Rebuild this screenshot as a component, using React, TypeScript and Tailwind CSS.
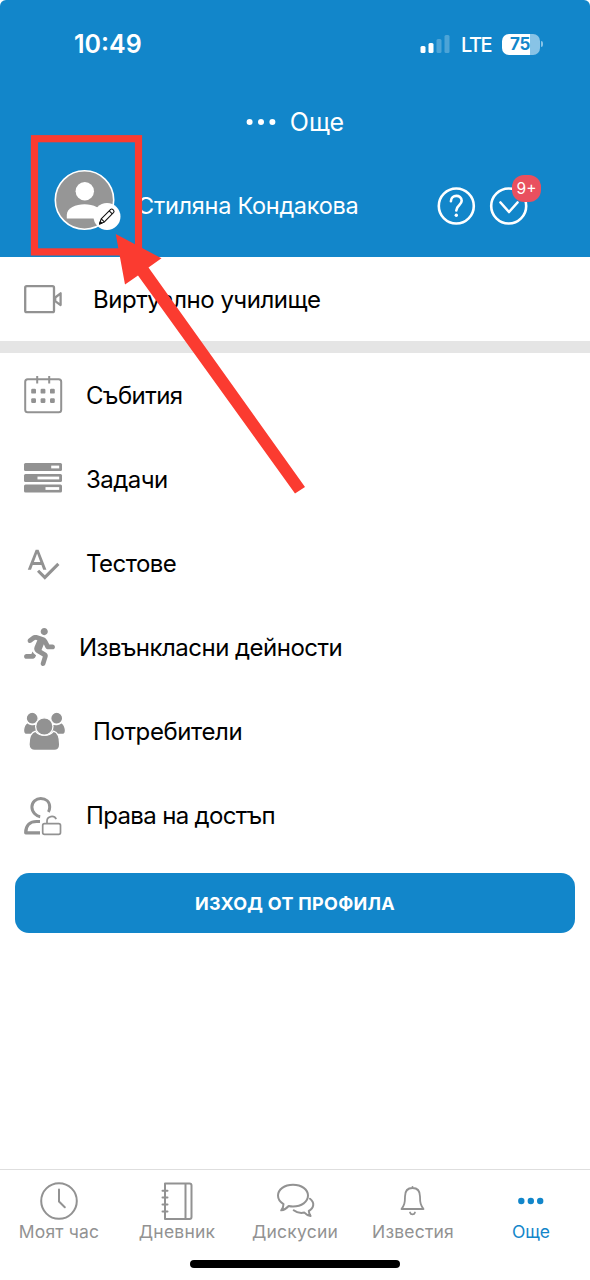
import type { ReactNode } from "react";
import { FaRunning } from "react-icons/fa";
import { MdSpellcheck } from "react-icons/md";

function Dots({ className }: { className: string }) {
  return (
    <svg className={className} viewBox="0 0 30 8" fill="currentColor">
      <circle cx="3.6" cy="4" r="3" />
      <circle cx="15" cy="4" r="3" />
      <circle cx="26.4" cy="4" r="3" />
    </svg>
  );
}

function StatusBar() {
  return (
    <div className="flex h-[88px] items-center pl-[74px] pr-[47px]">
      <span className="pt-px text-[25px] font-semibold leading-none">10:49</span>
      <svg className="ml-auto mr-[11px] h-[20px] w-[30px]" viewBox="0 0 30 20" fill="currentColor">
        <rect x="0.5" y="12" width="5" height="7" rx="1.5" />
        <rect x="8.5" y="9" width="5" height="10" rx="1.5" />
        <rect x="16.5" y="5" width="5" height="14" rx="1.5" opacity="0.25" />
        <rect x="24.5" y="1" width="5" height="18" rx="1.5" opacity="0.25" />
      </svg>
      <span className="w-[31px] whitespace-nowrap pt-px text-[20px] font-medium leading-none tracking-[-1.5px]">LTE</span>
      <div className="ml-[10px] flex h-[21px] w-[38px] items-center justify-center overflow-hidden rounded-[7px] bg-[linear-gradient(to_right,white_75%,#88c3e6_75%)] pr-[2px] text-[17px] font-bold leading-none tracking-[-0.3px] text-[#1286ca]">
        75
      </div>
      <div className="ml-px h-[6px] w-[2px] rounded-r-full bg-[#88c3e6]" />
    </div>
  );
}

function Avatar() {
  return (
    <svg className="mb-[8px] h-[66px] w-[68px] shrink-0" viewBox="0 0 68 66" fill="none">
      <circle cx="30.5" cy="31" r="29.2" fill="#969696" stroke="#fff" strokeWidth="1.6" />
      <circle cx="30.8" cy="22.3" r="9.2" fill="#fff" />
      <path d="M12.8 49.5v-3.7c0-6.7 9-10.600 17.700-10.600s17.700 3.900 17.700 10.600v3.700z" fill="#fff" />
      <circle cx="53" cy="47.500" r="13.500" fill="#fff" />
      <g stroke="#111" strokeWidth="1.100" strokeLinejoin="round">
        <path d="M45.500 55l1.700-5.200 9.500-9.400c1.500-1.200 4.300 1.300 3 3l-9.300 9.500z" />
        <path d="M47.200 49.800l3.200 3.100M55.200 41.800l3.100 3.100" />
        <path d="M45.500 55l.8-2.300 1.500 1.500z" fill="#111" />
      </g>
    </svg>
  );
}

function ProfileHeader() {
  return (
    <header className="h-[257px] bg-[#1286ca] text-white">
      <StatusBar />
      <div className="flex h-[68px] items-center justify-center gap-[14px] leading-none">
        <Dots className="h-[8px] w-[30px]" />
        <span className="text-[25px]">Още</span>
      </div>
      <div className="flex h-[100px] items-center pl-[54px] pr-[62px]">
        <Avatar />
        <span className="ml-[15px] whitespace-nowrap text-[23.5px] leading-none tracking-[-0.28px]">Стиляна Кондакова</span>
        <svg className="ml-auto h-[40px] w-[40px]" viewBox="0 0 40 40" fill="none" stroke="currentColor" strokeWidth="2.600" strokeLinecap="round">
          <circle cx="20.300" cy="20" r="17.500" />
          <path d="M14.900 15.200c.2-7 10.600-7 10.800-.4 0 4.500-5.400 4.300-5.400 9.700" />
          <circle cx="20.300" cy="29.300" r="1.700" fill="currentColor" stroke="none" />
        </svg>
        <div className="relative ml-[12px] h-[40px] w-[40px]">
          <svg className="h-full w-full" viewBox="0 0 40 40" fill="none" stroke="currentColor" strokeWidth="2.600" strokeLinecap="round" strokeLinejoin="round">
            <circle cx="20.700" cy="20" r="17.500" />
            <path d="M12.500 16.500l8.500 9.500 8.500-9.500" />
          </svg>
          <span className="absolute left-[24px] top-[-11px] flex h-[27px] w-[29px] items-center justify-center rounded-[12px] bg-[#e9505f] text-[15.500px] leading-none">
            9+
          </span>
        </div>
      </div>
    </header>
  );
}

const iconClass = "h-[44px] w-[44px] shrink-0 text-[#929292]";

const cameraIcon = (
  <svg className={iconClass} viewBox="0 0 44 44" fill="none" stroke="currentColor" strokeWidth="2.300" strokeLinejoin="round">
    <rect x="3.200" y="9.200" width="28.800" height="26" rx="1.500" />
    <path d="M33.200 20.500L38.600 16.300v11.800l-5.400-4z" />
  </svg>
);

const calendarIcon = (
  <svg className={iconClass} viewBox="0 0 44 44" fill="none" stroke="currentColor" strokeWidth="2">
    <rect x="3.200" y="6.200" width="36" height="33" rx="2.500" />
    <path d="M15.200 3v7.500M27.200 3v7.500" />
    <g fill="currentColor" stroke="none">
      {[9.2, 18.6, 28].map((x) => (
        <g key={x}>
          <rect x={x} y="15.800" width="4.800" height="4.800" rx="1.200" />
          <rect x={x} y="25.200" width="4.800" height="4.800" rx="1.200" />
        </g>
      ))}
    </g>
  </svg>
);

const tasksIcon = (
  <svg className={iconClass} viewBox="0 0 44 44" fill="currentColor">
    <rect x="2" y="6" width="38" height="8" rx="1.500" />
    <rect x="2" y="17" width="38" height="8" rx="1.500" />
    <rect x="2" y="27.500" width="38" height="8" rx="1.500" />
    <g fill="#fff">
      <rect x="29.200" y="8.600" width="8" height="2.800" />
      <rect x="15.500" y="19.600" width="21.700" height="2.800" />
      <rect x="23.500" y="30.100" width="13.700" height="2.800" />
    </g>
  </svg>
);

const usersIcon = (
  <svg className={iconClass} viewBox="0 0 44 44" fill="currentColor" stroke="#fff" strokeWidth="1.300">
    <circle cx="10.200" cy="9.200" r="6" />
    <circle cx="34.700" cy="9.200" r="6" />
    <path d="M5.500 13.500c2 2.500 6.500 2.700 9 1.200L17 25.500H4c-3.500 0-3.500-8.500 1.500-12zM39.300 13.500c-2 2.500-6.500 2.700-9 1.200L28 25.500h13c3.500 0 3.500-8.500-1.700-12z" />
    <path d="M13.500 22.200c5 5.500 13 5.500 18 0 5.300 1.400 6.200 8.500 6.200 13.300 0 3.800-2.300 6-5.500 6h-19.500c-3.200 0-5.700-2.200-5.700-6 0-4.800 1.200-11.900 6.500-13.300z" />
    <circle cx="22.300" cy="17.500" r="8.700" />
  </svg>
);

const accessIcon = (
  <svg className={iconClass} viewBox="0 0 44 44" fill="none" stroke="currentColor">
    <path d="M18.200 23.800c-3.500-.5-8.300-4.200-8.300-9.800 0-5.300 4.200-8.500 8.800-8.500 5.300 0 9 3.400 9 8.500 0 2-.5 3.800-1.300 5" strokeWidth="3" />
    <path d="M18 28.500h-3.500c-6 0-10.800 3.600-10.800 11.300H18" strokeWidth="3.200" strokeLinejoin="round" />
    <rect x="20.700" y="30.700" width="17.800" height="10.600" rx="1.800" strokeWidth="1.700" />
    <path d="M25 30.500v-2.500c0-5 7.200-6.200 9.200-1.800" strokeWidth="1.700" />
  </svg>
);

function MenuRow({ icon, label, inset }: { icon: ReactNode; label: string; inset: string }) {
  return (
    <div className="flex h-[84px] items-center pl-[22px] text-[24px] leading-none text-black">
      {icon}
      <span className={`whitespace-nowrap pt-[2px] ${inset}`}>{label}</span>
    </div>
  );
}

function Tab({ label, children, active = false }: { label: string; children: ReactNode; active?: boolean }) {
  return (
    <div className={`flex flex-1 flex-col items-center pt-[8px] ${active ? "text-[#1286ca]" : "text-[#929292]"}`}>
      <div className="flex h-[44px] items-center justify-center">{children}</div>
      <span className={`text-[17.500px] leading-[20px] ${active ? "tracking-[0px]" : "tracking-[0.2px]"}`}>{label}</span>
    </div>
  );
}

function TabBar() {
  const stroke = { fill: "none", stroke: "currentColor", strokeWidth: 2, strokeLinejoin: "round", strokeLinecap: "round" } as const;
  return (
    <nav className="mt-auto h-[111px] border-t border-[#dedede]">
      <div className="flex h-[90px]">
        <Tab label="Моят час">
          <svg className="h-[44px] w-[44px]" viewBox="0 0 44 44" {...stroke}>
            <circle cx="22" cy="23" r="17.800" />
            <path d="M22 11.500V23.500l5.800 5.800" />
          </svg>
        </Tab>
        <Tab label="Дневник">
          <svg className="h-[44px] w-[44px]" viewBox="0 0 44 44" {...stroke}>
            <path d="M10 5.500h24.500a2 2 0 0 1 2 2v31.500a2 2 0 0 1-2 2H10zM30.500 5.500v35M7.500 12.800h5M7.500 19.500h5M7.500 26.500h5M7.500 33.500h5" />
          </svg>
        </Tab>
        <Tab label="Дискусии">
          <svg className="h-[44px] w-[44px]" viewBox="0 0 44 44" {...stroke}>
            <path d="M20 6.700c8.600 0 15 4.700 15 10.900s-6.400 10.900-15 10.900c-1.600 0-3-.2-4.300-.5-2 2.300-4.500 4-7.500 4.300 1.500-1.700 2.300-3.700 2.300-6.200-3.400-2-5.500-5-5.500-8.500 0-6.200 6.400-10.900 15-10.900z" />
            <path d="M37 20.700c5 3.800 4 9.500-1.200 12.300.1 2.200.8 3.500 1.800 5-2.600-.4-4.600-1.600-6.200-3.400-4 .7-8-.1-10.700-2.300" />
          </svg>
        </Tab>
        <Tab label="Известия">
          <svg className="h-[44px] w-[44px]" viewBox="0 0 44 44" {...stroke} strokeWidth={1.800}>
            <path d="M21.500 10c5 0 7.500 3.500 7.500 8.500 0 6.500.7 8.500 3.500 12.500H10.500c2.800-4 3.500-6 3.500-12.500 0-5 2.500-8.500 7.500-8.500zM21.500 8.800V10M19 34.500c.8 2.500 4.200 2.500 5 0" />
          </svg>
        </Tab>
        <Tab label="Още" active>
          <svg className="mt-[2px] h-[8px] w-[26px]" viewBox="0 0 26 8" fill="currentColor">
            <circle cx="3.300" cy="4" r="3.200" />
            <circle cx="12.800" cy="4" r="3.200" />
            <circle cx="22.200" cy="4" r="3.200" />
          </svg>
        </Tab>
      </div>
      <div className="mx-auto h-[8px] w-[210px] rounded-full bg-black" />
    </nav>
  );
}

function Callout() {
  return (
    <svg className="pointer-events-none absolute left-0 top-0 h-[520px] w-[330px]" viewBox="0 0 330 520">
      <rect x="34.500" y="138.700" width="104" height="113.200" fill="none" stroke="#fb3b30" strokeWidth="7.200" />
      <path d="M115.700 234L161.500 258.300 148.500 267.500 305 487 295 493.500 138 275.500 125 284.500z" fill="#fb3b30" />
    </svg>
  );
}

export default function App() {
  return (
    <div className="bg-white font-['Inter',sans-serif]">
      <main className="relative flex h-[1280px] w-[590px] flex-col overflow-hidden rounded-t-[6px] bg-white">
        <ProfileHeader />
        <MenuRow icon={cameraIcon} label="Виртуално училище" inset="ml-[27px] tracking-[-0.47px]" />
        <div className="h-[12px] bg-[#e5e5e5]" />
        <MenuRow icon={calendarIcon} label="Събития" inset="ml-[20px] tracking-[-0.55px]" />
        <MenuRow icon={tasksIcon} label="Задачи" inset="ml-[20px] tracking-[-0.55px]" />
        <MenuRow icon={<MdSpellcheck className="ml-[2px] mr-[5px] h-[37px] w-[37px] text-[#929292]" />} label="Тестове" inset="ml-[20px] tracking-[-0.55px]" />
        <MenuRow icon={<FaRunning className="ml-[2px] mr-[11px] h-[38px] w-[31px] text-[#929292]" />} label="Извънкласни дейности" inset="ml-[13px] tracking-[-0.52px]" />
        <MenuRow icon={usersIcon} label="Потребители" inset="ml-[27px] tracking-[-0.4px]" />
        <MenuRow icon={accessIcon} label="Права на достъп" inset="ml-[20px] tracking-[-0.65px]" />
        <button className="mx-[15px] mt-[16px] h-[60px] rounded-[14px] bg-[#1286ca] pt-px text-[18px] font-bold leading-none tracking-[0.3px] text-white">
          ИЗХОД ОТ ПРОФИЛА
        </button>
        <TabBar />
        <Callout />
      </main>
    </div>
  );
}
